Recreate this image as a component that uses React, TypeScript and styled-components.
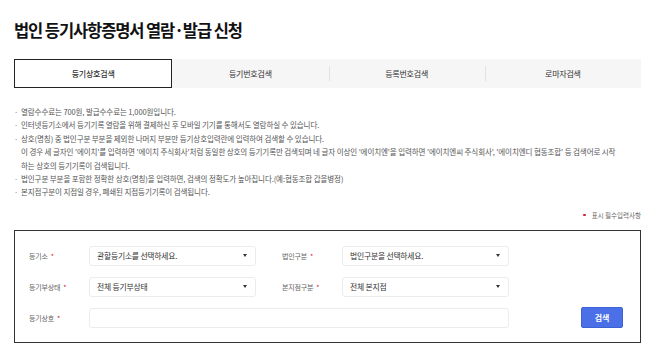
import React from "react";
import styled, { createGlobalStyle } from "styled-components";

const Global = createGlobalStyle`
  html, body { margin: 0; padding: 0; background: #fff; }
  body { font-family: "Noto Sans CJK KR", "Noto Sans", sans-serif; color: #333; }
  * { box-sizing: border-box; }
`;

const Page = styled.div`
  width: 627px;
  margin-left: 14px;
  padding-top: 19px;
`;

const Title = styled.h1`
  margin: 0;
  font-size: 16.5px;
  line-height: 22px;
  font-weight: 700;
  letter-spacing: -1.1px;
  color: #111;
`;

const Tabs = styled.div`
  margin-top: 18px;
  display: flex;
  height: 29px;
  background: #f6f6f6;
`;

const Tab = styled.div<{ $active?: boolean; $sep?: boolean }>`
  flex: 1;
  display: flex;
  align-items: center;
  justify-content: center;
  font-size: 8px;
  letter-spacing: -0.2px;
  color: #333;
  font-weight: ${(p) => (p.$active ? 500 : 400)};
  position: relative;
  background: ${(p) => (p.$active ? "#fff" : "transparent")};
  border: ${(p) => (p.$active ? "1.5px solid #222" : "none")};
  &::before {
    content: "";
    display: ${(p) => (p.$sep ? "block" : "none")};
    position: absolute;
    left: 0;
    top: 7px;
    bottom: 7px;
    width: 1px;
    background: #e2e2e2;
  }
`;

const Notes = styled.ul`
  list-style: none;
  margin: 17px 0 0;
  padding: 0;
  font-size: 7.5px;
  line-height: 13.4px;
  color: #555;
  letter-spacing: -0.1px;
`;

const Note = styled.li`
  position: relative;
  padding-left: 7px;
  white-space: nowrap;
  &::before {
    content: "·";
    position: absolute;
    left: 0;
    top: 0;
    color: #777;
  }
`;

const Required = styled.div`
  margin-top: 11px;
  display: flex;
  justify-content: flex-end;
  align-items: center;
  font-size: 6.5px;
  color: #666;
  line-height: 10px;
  gap: 6px;
`;

const RedDot = styled.span`
  display: inline-block;
  width: 2.5px;
  height: 2.5px;
  border-radius: 50%;
  background: #d4202c;
`;

const FormBox = styled.div`
  margin-top: 10px;
  border: 1px solid #333;
  padding: 15px 17px 14px 14px;
  display: grid;
  grid-template-columns: 60px 167px 26px 60px 167px 1fr;
  grid-auto-rows: 20px;
  row-gap: 11px;
  align-items: center;
`;

const Label = styled.div<{ $col: number }>`
  grid-column: ${(p) => p.$col};
  font-size: 7px;
  color: #666;
  letter-spacing: -0.2px;
  display: flex;
  align-items: center;
  gap: 3px;
`;

const Star = styled.span`
  color: #d4202c;
  font-size: 7px;
`;

const Select = styled.div<{ $col: number }>`
  grid-column: ${(p) => p.$col};
  height: 20px;
  border: 1px solid #ececec;
  border-radius: 3px;
  background: #fff;
  display: flex;
  align-items: center;
  justify-content: space-between;
  padding: 0 8px 0 7px;
  font-size: 7.8px;
  color: #333;
  letter-spacing: -0.2px;
`;

const Arrow = styled.span`
  width: 0;
  height: 0;
  border-left: 2.5px solid transparent;
  border-right: 2.5px solid transparent;
  border-top: 3px solid #333;
`;

const Input = styled.div`
  grid-column: 2 / 6;
  height: 20px;
  border: 1px solid #ececec;
  border-radius: 3px;
  background: #fff;
`;

const Button = styled.button`
  grid-column: 6;
  justify-self: end;
  width: 42px;
  height: 21px;
  border: 1px solid #3d62d6;
  border-radius: 2px;
  background: #4a6fe6;
  color: #fff;
  font-family: inherit;
  font-size: 8px;
  font-weight: 700;
  padding: 0;
  cursor: pointer;
`;

const notes: React.ReactNode[] = [
  "열람수수료는 700원, 발급수수료는 1,000원입니다.",
  "인터넷등기소에서 등기기록 열람을 위해 결제하신 후 모바일 기기를 통해서도 열람하실 수 있습니다.",
  <>
    상호(명칭) 중 법인구분 부분을 제외한 나머지 부분만 등기상호입력란에 입력하여 검색할 수 있습니다.
    <br />
    이 경우 세 글자인 '에이치'를 입력하면 '에이치 주식회사'처럼 동일한 상호의 등기기록만 검색되며 네 글자 이상인 '에이치엔'을 입력하면 '에이치엔씨 주식회사', '에이치엔디 협동조합' 등 검색어로 시작
    <br />
    하는 상호의 등기기록이 검색됩니다.
  </>,
  "법인구분 부분을 포함한 정확한 상호(명칭)을 입력하면, 검색의 정확도가 높아집니다.(예:협동조합 갑을병정)",
  "본지점구분이 지점일 경우, 폐쇄된 지점등기기록이 검색됩니다.",
];

export default function App() {
  return (
    <>
      <Global />
      <Page>
        <Title>법인 등기사항증명서 열람·발급 신청</Title>
        <Tabs>
          <Tab $active>등기상호검색</Tab>
          <Tab>등기번호검색</Tab>
          <Tab $sep>등록번호검색</Tab>
          <Tab $sep>로마자검색</Tab>
        </Tabs>
        <Notes>
          {notes.map((n, i) => (
            <Note key={i}>{n}</Note>
          ))}
        </Notes>
        <Required>
          <RedDot />
          <span>표시 필수입력사항</span>
        </Required>
        <FormBox>
          <Label $col={1}>
            등기소 <Star>*</Star>
          </Label>
          <Select $col={2}>
            관할등기소를 선택하세요.
            <Arrow />
          </Select>
          <Label $col={4}>
            법인구분 <Star>*</Star>
          </Label>
          <Select $col={5}>
            법인구분을 선택하세요.
            <Arrow />
          </Select>

          <Label $col={1}>
            등기부상태 <Star>*</Star>
          </Label>
          <Select $col={2}>
            전체 등기부상태
            <Arrow />
          </Select>
          <Label $col={4}>
            본지점구분 <Star>*</Star>
          </Label>
          <Select $col={5}>
            전체 본지점
            <Arrow />
          </Select>

          <Label $col={1}>
            등기상호 <Star>*</Star>
          </Label>
          <Input />
          <Button>검색</Button>
        </FormBox>
      </Page>
    </>
  );
}
